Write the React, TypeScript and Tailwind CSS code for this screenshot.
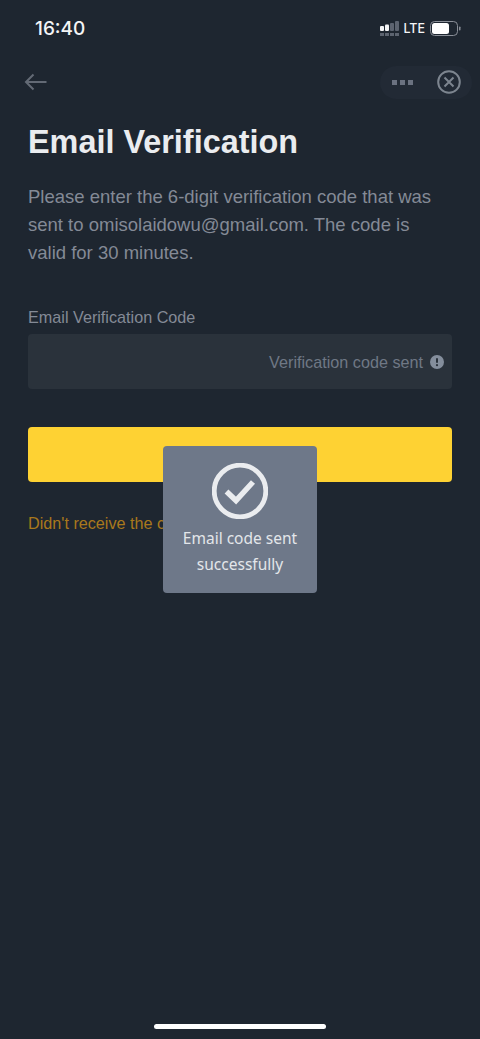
export default function App() {
  return (
    <div className="relative flex h-[1039px] w-[480px] flex-col overflow-hidden bg-[#1e2630] font-['Liberation_Sans',Arial,sans-serif]">
      {/* Status bar */}
      <div className="flex h-[58px] items-center justify-between pl-[35px] pr-[19px]">
        <span className="font-['Inter',sans-serif] text-[19px] font-medium text-[#f4f5f6]">16:40</span>
        <div className="flex items-center gap-[3px]">
          <svg width="20" height="16" viewBox="0 0 20 16" aria-hidden="true">
            <rect x="0" y="5" width="4" height="5" rx="1" fill="#f4f5f6" />
            <rect x="5" y="3.5" width="4" height="6.5" rx="1" fill="#f4f5f6" />
            <rect x="10" y="2" width="4" height="8" rx="1" fill="#5d6470" />
            <rect x="15" y="0" width="4" height="10" rx="1" fill="#5d6470" />
            <rect x="0" y="12" width="4" height="3" fill="#5d6470" />
            <rect x="5" y="12" width="4" height="3" fill="#5d6470" />
            <rect x="10" y="12" width="4" height="3" fill="#5d6470" />
            <rect x="15" y="12" width="4" height="3" fill="#5d6470" />
          </svg>
          <span className="mr-[2px] font-['Inter',sans-serif] text-[12.5px] font-medium leading-none text-[#f4f5f6]">LTE</span>
          <svg width="31" height="16" viewBox="0 0 31 16" aria-hidden="true">
            <rect x="0.5" y="0.5" width="27" height="14" rx="4" fill="none" stroke="#8a8f98" />
            <rect x="2" y="2" width="17" height="11" rx="2.5" fill="#ffffff" />
            <rect x="29" y="5.5" width="1.5" height="4" rx="0.75" fill="#8a8f98" />
          </svg>
        </div>
      </div>

      {/* Nav bar */}
      <div className="flex h-[48px] items-center justify-between pl-[24px] pr-[8px]">
        <svg width="23" height="18" viewBox="0 0 23 18" fill="none" stroke="#636a75" strokeWidth="2" aria-hidden="true">
          <path d="M22.5 9H2" />
          <path d="M9.5 1.5 2 9l7.5 7.5" />
        </svg>
        <div className="flex h-[33px] w-[92px] items-center justify-between rounded-full bg-[#222a35] pl-[12px] pr-[11px]">
          <div className="flex gap-[3px]">
            <span className="h-[5px] w-[5px] bg-[#6b7280]" />
            <span className="h-[5px] w-[5px] bg-[#6b7280]" />
            <span className="h-[5px] w-[5px] bg-[#6b7280]" />
          </div>
          <svg width="24" height="24" viewBox="0 0 24 24" fill="none" stroke="#7d858f" strokeWidth="2" aria-hidden="true">
            <circle cx="12" cy="12" r="10.8" />
            <path d="M7.5 7.5l9 9M16.5 7.5l-9 9" />
          </svg>
        </div>
      </div>

      {/* Content */}
      <div className="flex flex-1 flex-col px-[28px]">
        <h1 className="mt-[16px] text-[32.4px] font-bold leading-[40px] text-[#eaecef]">Email Verification</h1>
        <p className="mt-[21px] text-[18.5px] leading-[28px] text-[#848a96]">
          Please enter the 6-digit verification code that was sent to omisolaidowu@gmail.com. The code is valid for 30 minutes.
        </p>
        <label className="mt-[38px] text-[16.2px] leading-[24px] text-[#848a96]">Email Verification Code</label>
        <div className="mt-[5px] flex h-[55px] items-center justify-end gap-[7px] rounded-[4px] bg-[#2a323b] pr-[8px] pt-[1px]">
          <span className="text-[16.2px] text-[#6f7885]">Verification code sent</span>
          <svg width="14" height="14" viewBox="0 0 14 14" aria-hidden="true">
            <circle cx="7" cy="7" r="7" fill="#848e9c" />
            <rect x="6" y="3" width="2" height="5" rx="1" fill="#2a323b" />
            <circle cx="7" cy="10.2" r="1.1" fill="#2a323b" />
          </svg>
        </div>
        <div className="mt-[38px] h-[55px] rounded-[4px] bg-[#fed233]" />
        <p className="mt-[31px] text-[16.2px] leading-[20px] text-[#a9781c]">Didn&apos;t receive the code?</p>
      </div>

      {/* Home indicator */}
      <div className="flex justify-center pb-[10px]">
        <div className="h-[5px] w-[172px] rounded-full bg-white" />
      </div>

      {/* Toast */}
      <div className="absolute left-[163px] top-[446px] flex h-[147px] w-[154px] flex-col items-center rounded-[4px] bg-[#6e7889] pt-[17px]">
        <svg width="56" height="56" viewBox="0 0 56 56" fill="none" stroke="#eaecef" aria-hidden="true">
          <circle cx="28" cy="28" r="25.8" strokeWidth="4.8" />
          <path d="M14.5 28.5 24 37.5 41 19" strokeWidth="5.5" />
        </svg>
        <p className="mt-[6px] text-center font-['Noto_Sans',sans-serif] text-[15.5px] leading-[26px] text-[#e3e6ea]">
          Email code sent
          <br />
          successfully
        </p>
      </div>
    </div>
  );
}
